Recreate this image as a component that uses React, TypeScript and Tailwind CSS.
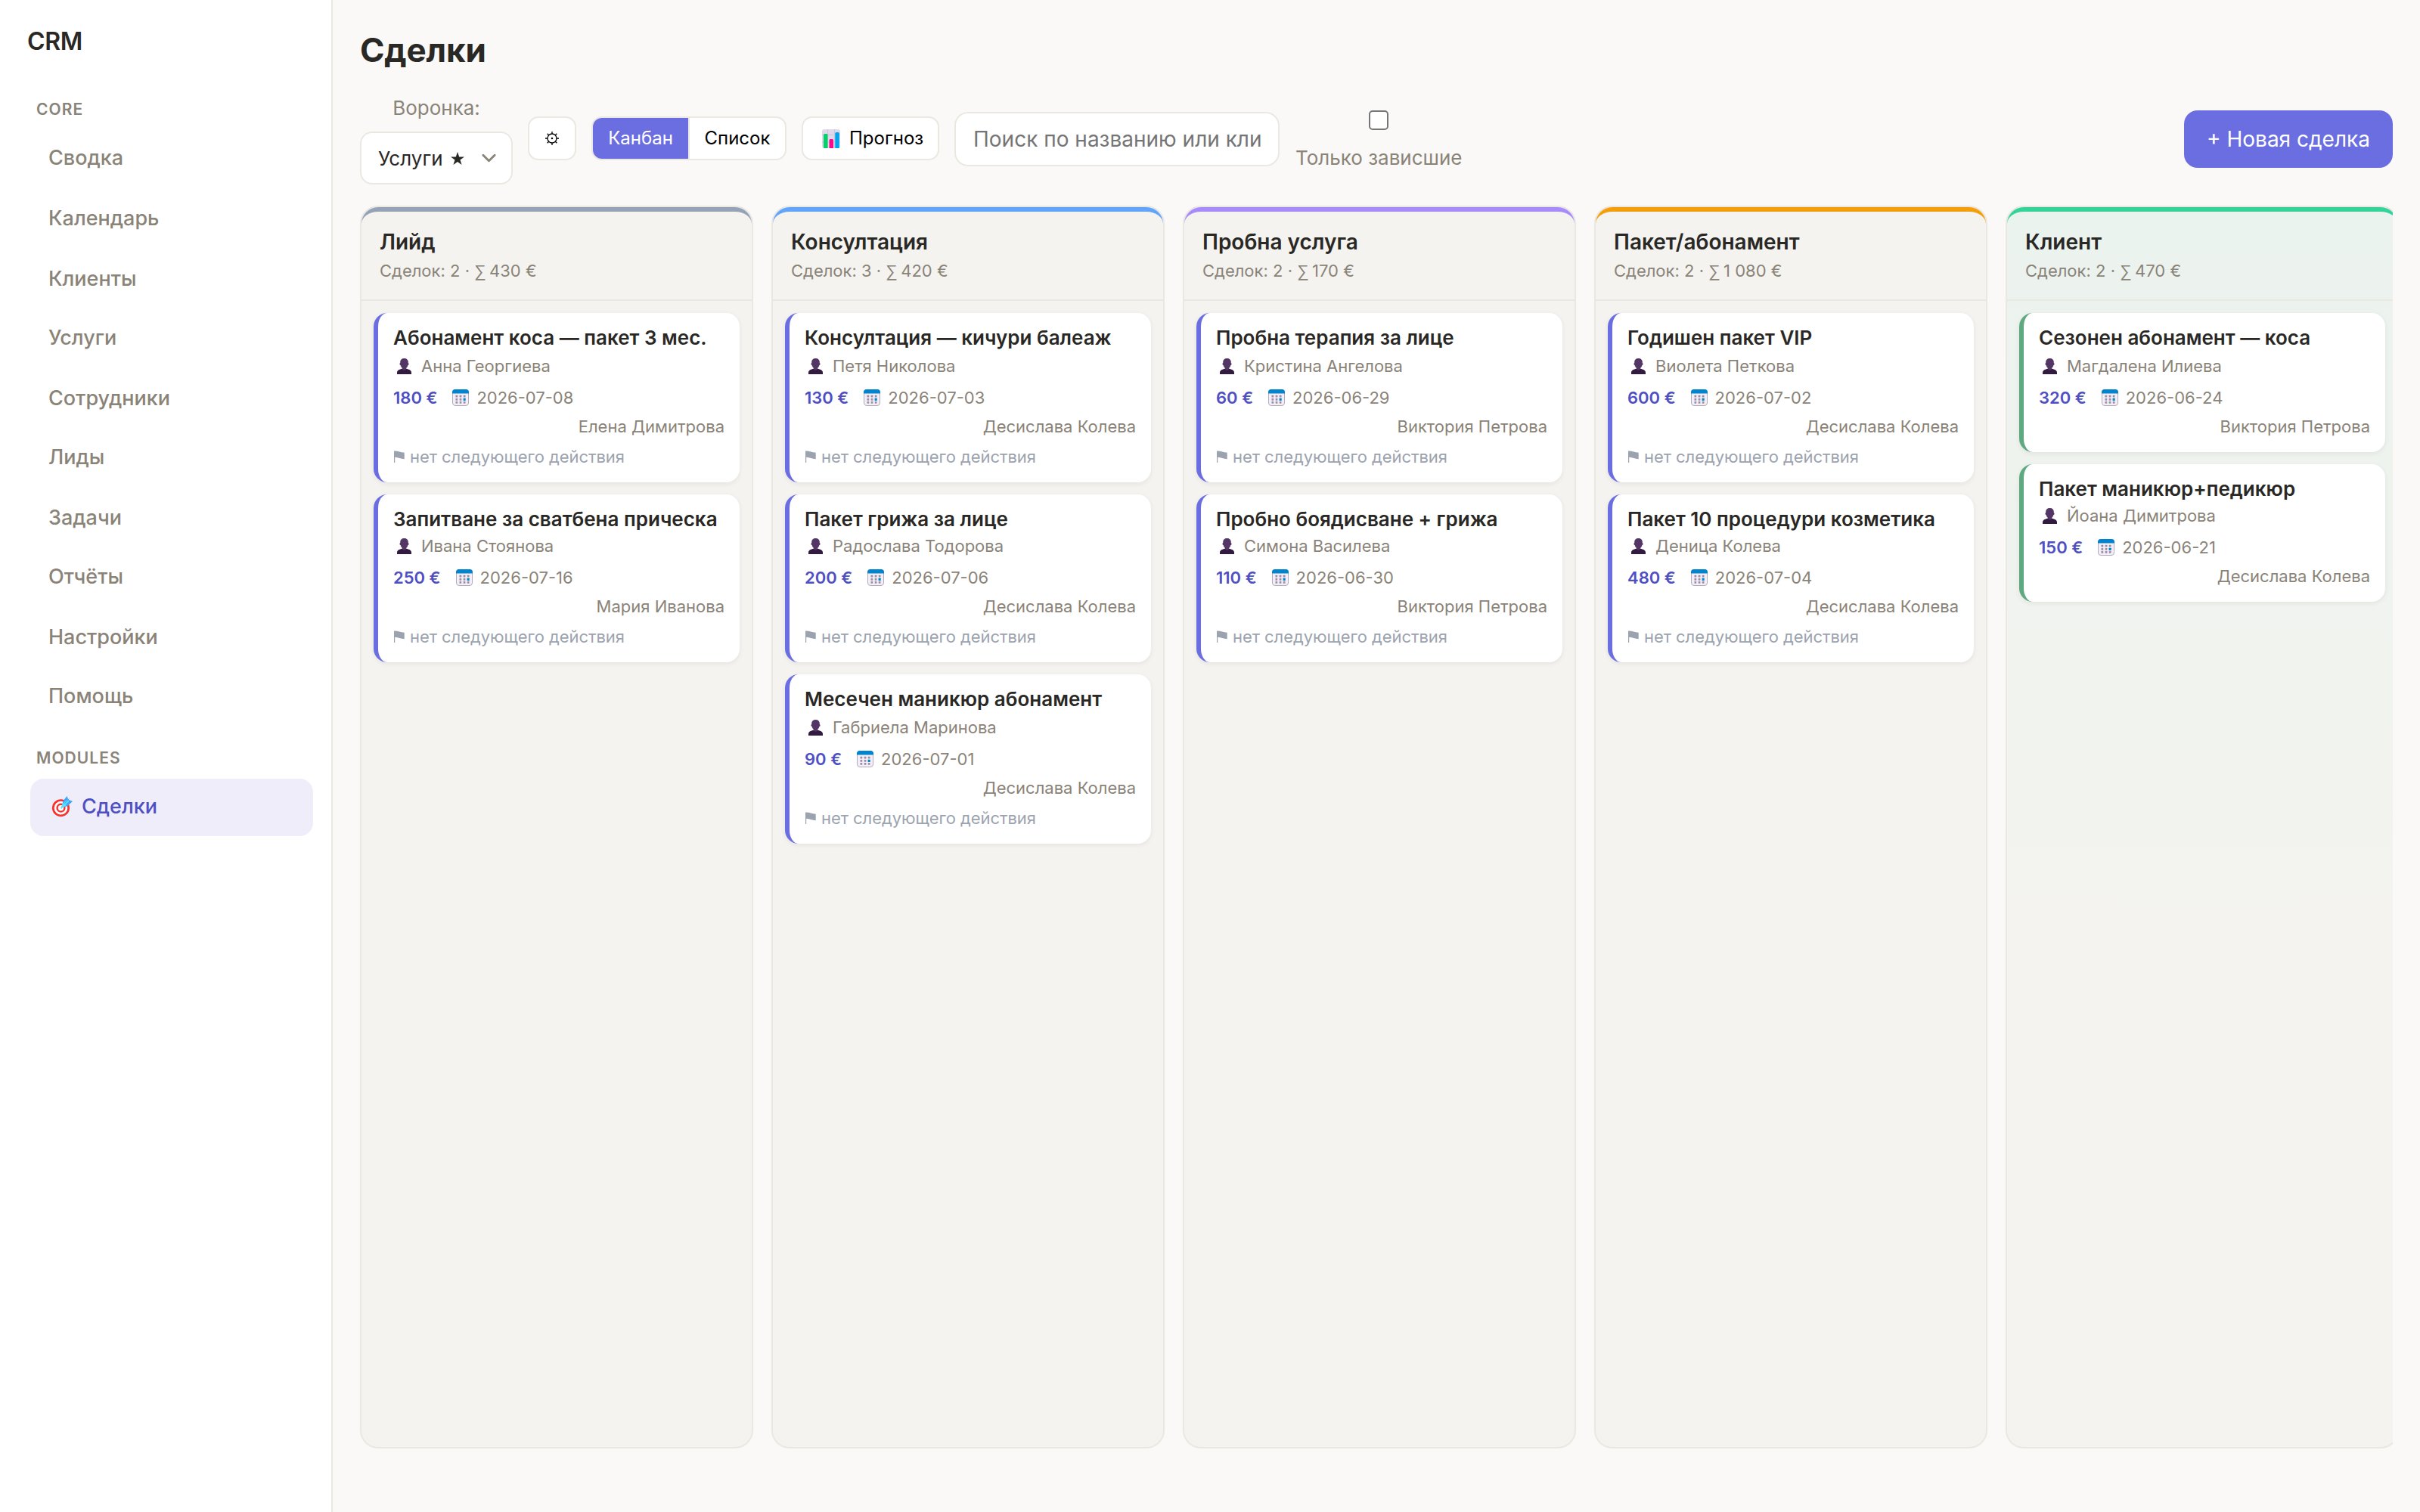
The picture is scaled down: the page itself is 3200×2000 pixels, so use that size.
import React from "react";

type Deal = {
  title: string;
  client: string;
  amount: string;
  date: string;
  owner: string;
};

type Stage = {
  name: string;
  count: number;
  sum: string;
  bar: string;
  won?: boolean;
  deals: Deal[];
};

const NAV: string[] = [
  "Сводка",
  "Календарь",
  "Клиенты",
  "Услуги",
  "Сотрудники",
  "Лиды",
  "Задачи",
  "Отчёты",
  "Настройки",
  "Помощь",
];

const STAGES: Stage[] = [
  {
    name: "Лийд",
    count: 2,
    sum: "430 €",
    bar: "border-t-[#94a3b8]",
    deals: [
      { title: "Абонамент коса — пакет 3 мес.", client: "Анна Георгиева", amount: "180 €", date: "2026-07-08", owner: "Елена Димитрова" },
      { title: "Запитване за сватбена прическа", client: "Ивана Стоянова", amount: "250 €", date: "2026-07-16", owner: "Мария Иванова" },
    ],
  },
  {
    name: "Консултация",
    count: 3,
    sum: "420 €",
    bar: "border-t-[#60a5fa]",
    deals: [
      { title: "Консултация — кичури балеаж", client: "Петя Николова", amount: "130 €", date: "2026-07-03", owner: "Десислава Колева" },
      { title: "Пакет грижа за лице", client: "Радослава Тодорова", amount: "200 €", date: "2026-07-06", owner: "Десислава Колева" },
      { title: "Месечен маникюр абонамент", client: "Габриела Маринова", amount: "90 €", date: "2026-07-01", owner: "Десислава Колева" },
    ],
  },
  {
    name: "Пробна услуга",
    count: 2,
    sum: "170 €",
    bar: "border-t-[#a78bfa]",
    deals: [
      { title: "Пробна терапия за лице", client: "Кристина Ангелова", amount: "60 €", date: "2026-06-29", owner: "Виктория Петрова" },
      { title: "Пробно боядисване + грижа", client: "Симона Василева", amount: "110 €", date: "2026-06-30", owner: "Виктория Петрова" },
    ],
  },
  {
    name: "Пакет/абонамент",
    count: 2,
    sum: "1 080 €",
    bar: "border-t-[#f59e0b]",
    deals: [
      { title: "Годишен пакет VIP", client: "Виолета Петкова", amount: "600 €", date: "2026-07-02", owner: "Десислава Колева" },
      { title: "Пакет 10 процедури козметика", client: "Деница Колева", amount: "480 €", date: "2026-07-04", owner: "Десислава Колева" },
    ],
  },
  {
    name: "Клиент",
    count: 2,
    sum: "470 €",
    bar: "border-t-[#34d399]",
    won: true,
    deals: [
      { title: "Сезонен абонамент — коса", client: "Магдалена Илиева", amount: "320 €", date: "2026-06-24", owner: "Виктория Петрова" },
      { title: "Пакет маникюр+педикюр", client: "Йоана Димитрова", amount: "150 €", date: "2026-06-21", owner: "Десислава Колева" },
    ],
  },
];

const PersonIcon: React.FC = () => (
  <svg className="ml-[5px] mr-[13px] h-[21px] w-[19px] shrink-0" viewBox="0 0 19 21">
    <path d="M0 21v-2c0-2.4 1.6-3.6 3.6-4.2L7 13.6h5l3.4 1.2c2 .6 3.6 1.8 3.6 4.2v2z" fill="#321b41" />
    <path d="M9.500 0C6 0 4.200 2 4.200 5v1.200c-.7.200-.9.800-.7 1.500.2.800.5 1.300 1.100 1.400.4 1.700 1.200 3 2.400 3.900v1.200c.6.900 1.400 1.400 2.500 1.400s1.900-.5 2.500-1.400V13c1.200-.9 2-2.200 2.400-3.900.6-.1.900-.6 1.100-1.400.2-.7 0-1.300-.7-1.500V5c0-3-1.800-5-5.300-5z" fill="#533566" />
  </svg>
);

const CalendarIcon: React.FC = () => (
  <svg className="h-[22px] w-[22px] shrink-0" viewBox="0 0 22 22">
    <rect x=".5" y=".5" width="21" height="21" rx="3.500" fill="#f3eef8" stroke="#b4acbc" />
    <path d="M0 5.500V4a4 4 0 0 1 4-4h14a4 4 0 0 1 4 4v1.500z" fill="#0084ce" />
    <g fill="#998ea4">
      <rect x="4.500" y="7.800" width="2.700" height="2.700" rx=".5" />
      <rect x="9.700" y="7.800" width="2.700" height="2.700" rx=".5" />
      <rect x="14.800" y="7.800" width="2.700" height="2.700" rx=".5" />
      <rect x="4.500" y="12" width="2.700" height="2.700" rx=".5" />
      <rect x="9.700" y="12" width="2.700" height="2.700" rx=".5" />
      <rect x="4.500" y="16" width="2.700" height="2.700" rx=".5" />
      <rect x="9.700" y="16" width="2.700" height="2.700" rx=".5" />
      <rect x="14.800" y="16" width="2.700" height="2.700" rx=".5" />
    </g>
    <rect x="14.600" y="11.800" width="3.100" height="3.100" rx=".5" fill="#0084ce" />
  </svg>
);

const FlagIcon: React.FC = () => (
  <svg className="ml-[1px] mr-[7px] h-[16px] w-[14px] shrink-0" viewBox="0 0 14 16">
    <path d="M0 0.500h1.200c4 .2 7.500 1.800 12.500 2.300V11.300C9 11 5.500 9.200 1.200 8.800V16H0z" fill="#9ca3af" />
  </svg>
);

const ChartIcon: React.FC = () => (
  <svg className="h-[25px] w-[24px] shrink-0" viewBox="0 0 24 25">
    <rect width="24" height="25" rx="3" fill="#e1d8ec" />
    <path d="M0 7.500h24M0 17h24M7.500 0v25M16.500 0v25" stroke="#cdc4d6" strokeWidth="1" />
    <path d="M2 7.500a1.500 1.500 0 0 1 1.500-1.500H6a1.500 1.500 0 0 1 1.500 1.500V25H2z" fill="#00d26a" />
    <path d="M9.500 14.500a1.500 1.500 0 0 1 1.500-1.500h2.500a1.500 1.500 0 0 1 1.500 1.500V25H9.500z" fill="#f70a8d" />
    <path d="M17.300 5.500a1.500 1.500 0 0 1 1.500-1.500h2.500a1.500 1.500 0 0 1 1.500 1.500V25h-5.500z" fill="#00a6ed" />
  </svg>
);

const TargetIcon: React.FC = () => (
  <svg className="h-[28px] w-[28px] shrink-0" viewBox="0 0 28 28">
    <circle cx="12.500" cy="15.700" r="10.200" fill="#fff" stroke="#f8312f" strokeWidth="2.700" />
    <circle cx="12.500" cy="15.700" r="4.900" fill="#fff" stroke="#f8312f" strokeWidth="2.400" />
    <path d="M13.300 15.500l4-6" stroke="#50e2ff" strokeWidth="2.200" strokeLinecap="round" />
    <path d="M14 11.500l1.500-5L20.500 0l2 4.800 5.500 2.200-6 5.600-5.200 2.400z" fill="#46a4fb" />
    <path d="M13.500 14.500l1-4 7-6 2.200 2.700-5.700 6.500z" fill="#50e2ff" />
    <path d="M17.500 10l6-6.500M19.300 11.200l5.700-5" stroke="#2f8fe8" strokeWidth=".7" />
  </svg>
);

const GearIcon: React.FC = () => (
  <svg className="h-[18px] w-[18px]" viewBox="0 0 18 18" fill="none" stroke="#000" strokeWidth="1.300">
    <circle cx="9" cy="9" r="6" />
    <path d="M9 0v3M9 15v3M0 9h3M15 9h3M2.700 2.700l2 2M13.300 13.300l2 2M15.300 2.700l-2 2M4.700 13.300l-2 2" />
    <circle cx="9" cy="9" r=".6" />
  </svg>
);

const StarIcon: React.FC = () => (
  <svg className="mt-[1px] h-[17px] w-[18px]" viewBox="0 0 19 18">
    <path d="M9.500 0l2.300 6.800H19l-5.800 4.200 2.200 7-5.900-4.300L3.600 18l2.200-7L0 6.800h7.200z" fill="#2a2825" />
  </svg>
);

const Card: React.FC<{ deal: Deal; won?: boolean; tight: boolean }> = ({ deal, won, tight }) => (
  <div
    className={`rounded-[18px] border-l-[6px] bg-white px-[20px] pt-[16px] shadow-[0_2px_6px_rgba(40,35,25,0.07)] ${
      won ? "border-l-[#5fa981]" : "border-l-[#6b6ee0]"
    } ${won ? (tight ? "h-[182px]" : "h-[184px]") : tight ? "h-[222px]" : "h-[224px]"}`}
  >
    <div className="h-[33px] whitespace-nowrap text-[26px] font-semibold leading-[33px] text-[#2a2825]">
      {deal.title}
    </div>
    <div
      className={`flex h-[36px] items-center text-[22px] leading-[36px] text-[#8a8378] ${
        tight ? "mt-[1px]" : "mt-[3px]"
      }`}
    >
      <PersonIcon />
      {deal.client}
    </div>
    <div className="mt-[6px] flex h-[36px] items-center text-[22px] leading-[36px] text-[#8a8378]">
      <span className="mr-[20px] font-semibold text-[#4f4fc4]">{deal.amount}</span>
      <CalendarIcon />
      <span className="ml-[10px]">{deal.date}</span>
    </div>
    <div className="mt-[2px] h-[36px] text-right text-[22px] leading-[36px] text-[#8a8378]">{deal.owner}</div>
    {!won && (
      <div className="mt-[4px] flex h-[36px] items-center text-[22px] leading-[36px] tracking-[-0.050px] text-[#9ca3af]">
        <FlagIcon />
        нет следующего действия
      </div>
    )}
  </div>
);

const Column: React.FC<{ stage: Stage }> = ({ stage }) => (
  <div
    className={`flex h-[1644px] w-[520px] shrink-0 flex-col rounded-[24px] border-2 border-[#eae8e1] ${
      stage.won ? "bg-linear-to-b from-[#ebf3ee] to-[#f4f3ef] to-60%" : "bg-[#f4f3ef]"
    }`}
  >
    <div className={`h-[124px] rounded-t-[22px] border-b-2 border-t-[6px] border-b-[#eae8e1] px-[24px] pt-[19px] ${stage.bar}`}>
      <div className="h-[42px] text-[28px] font-semibold leading-[42px] text-[#2a2825]">{stage.name}</div>
      <div className="h-[34px] text-[22px] leading-[34px] text-[#8a8378]">
        Сделок: {stage.count} ·{" "}
        <span className="mr-[-2px] font-['Liberation_Sans',sans-serif] leading-none">∑</span> {stage.sum}
      </div>
    </div>
    <div className="flex flex-col gap-[16px] p-[16px]">
      {stage.deals.map((deal, index) => (
        <Card key={deal.title} deal={deal} won={stage.won} tight={index === 1} />
      ))}
    </div>
  </div>
);

const Sidebar: React.FC = () => (
  <aside className="h-full w-[440px] shrink-0 border-r-2 border-[#eae8e1] bg-white px-[24px]">
    <div className="ml-[12px] mt-[30px] h-[49px] text-[32px] font-semibold leading-[49px] tracking-[-0.300px] text-[#2a2825]">
      CRM
    </div>
    <div className="ml-[24px] mt-[49px] h-[33px] text-[21px] font-semibold leading-[33px] tracking-[1.050px] text-[#8a8378]">
      CORE
    </div>
    <nav className="ml-[16px] mt-[26px] text-[27px] font-medium leading-[43px] text-[#8a8378]">
      {NAV.map((item) => (
        <div key={item} className="h-[80px] pl-[24px] odd:not-first:h-[78px]">
          {item}
        </div>
      ))}
    </nav>
    <div className="ml-[24px] mt-[7px] h-[33px] text-[21px] font-semibold leading-[33px] tracking-[1.050px] text-[#8a8378]">
      MODULES
    </div>
    <div className="ml-[16px] mt-[11px] flex h-[76px] w-[374px] items-center rounded-[18px] bg-[#eeedf9] pb-[3px] pl-[28px] text-[27px] font-medium leading-[33px] text-[#4f4fc4]">
      <TargetIcon />
      <span className="ml-[12px]">Сделки</span>
    </div>
  </aside>
);

const Toolbar: React.FC = () => (
  <div className="flex h-[120px] items-center gap-[20px]">
    <label className="flex flex-col items-center text-[26px] leading-[37px] text-[#8a8378]">
      Воронка:
      <div className="mt-[13px] flex h-[70px] w-[202px] items-center rounded-[16px] border-2 border-[#eae8e1] bg-white pl-[22px] text-[26px] text-[#2a2825]">
        <span className="w-[96px]">Услуги</span>
        <StarIcon />
        <svg className="ml-[23px] h-[12px] w-[19px]" viewBox="0 0 20 12" fill="none" stroke="#8a8378" strokeWidth="3" strokeLinecap="round" strokeLinejoin="round">
          <path d="M2 2l8 8 8-8" />
        </svg>
      </div>
    </label>
    <button className="mb-[2px] flex h-[58px] w-[64px] items-center justify-center rounded-[14px] border-2 border-[#eae8e1] bg-white">
      <GearIcon />
    </button>
    <div className="mb-[2px] flex h-[58px] w-[258px] overflow-hidden rounded-[14px] border-2 border-[#eae8e1] bg-white text-[24px] text-black">
      <button className="w-[126px] bg-[#6b6ee0] text-white">Канбан</button>
      <button className="flex-1 border-l-2 border-[#eae8e1]">Список</button>
    </div>
    <button className="mb-[2px] flex h-[58px] w-[182px] items-center rounded-[14px] border-2 border-[#eae8e1] bg-white pl-[25px] text-[24px] text-black">
      <ChartIcon />
      <span className="ml-[12px]">Прогноз</span>
    </button>
    <input
      className="h-[72px] w-[430px] rounded-[18px] border-2 border-[#eae8e1] bg-white pl-[23px] pr-[22px] text-[28px] placeholder:text-[#757575]"
      placeholder="Поиск по названию или клиенту"
    />
    <label className="ml-[1px] flex flex-col items-center self-start pt-[22px] text-[26px] leading-[37px] text-[#8a8378]">
      <span className="mb-[18px] block h-[26px] w-[26px] rounded-[5px] border-2 border-[#767676] bg-white" />
      Только зависшие
    </label>
    <button className="ml-auto h-[76px] w-[276px] rounded-[18px] bg-[#6b6ee0] text-[28px] text-white">
      + Новая сделка
    </button>
  </div>
);

const App: React.FC = () => {
  return (
    <div className="flex h-[2000px] w-[3200px] overflow-hidden bg-[#faf9f7] font-[Inter,sans-serif]">
      <Sidebar />
      <main className="flex w-[2760px] flex-col px-[36px]">
        <h1 className="mt-[33px] h-[66px] text-[44px] font-bold leading-[66px] tracking-[-0.200px] text-[#2a2825]">Сделки</h1>
        <div className="mt-[25px]">
          <Toolbar />
        </div>
        <div className="mt-[28px] flex gap-[24px] overflow-hidden">
          {STAGES.map((stage) => (
            <Column key={stage.name} stage={stage} />
          ))}
        </div>
      </main>
    </div>
  );
};

export default App;
